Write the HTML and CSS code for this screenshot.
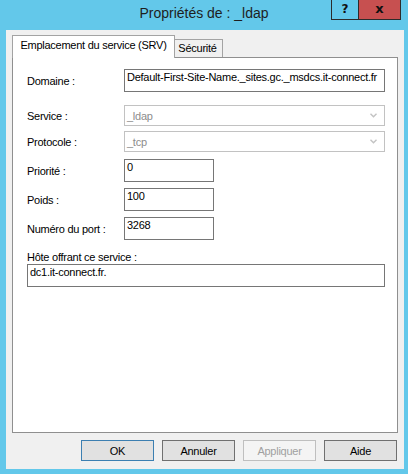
FILE: index.html
```html
<!DOCTYPE html>
<html lang="fr">
<head>
<meta charset="utf-8">
<title>Propriétés de : _ldap</title>
<link rel="stylesheet" href="styles.css">
</head>
<body>
<div class="window">
  <div class="titlebar">
    <div class="tb-spacer"></div>
    <div class="title">Propriétés de : _ldap</div>
    <div class="caps">
      <div class="cap help">?</div>
      <div class="cap close">x</div>
    </div>
  </div>
  <div class="client">
    <div class="tabs">
      <div class="tab tab-sel">Emplacement du service (SRV)</div>
      <div class="tab tab-off">Sécurité</div>
    </div>
    <div class="panel">
      <div class="row r-dom">
        <span class="lbl">Domaine :</span>
        <div class="box box-wide">Default-First-Site-Name._sites.gc._msdcs.it-connect.fr</div>
      </div>
      <div class="row r-svc">
        <span class="lbl">Service :</span>
        <div class="select"><span>_ldap</span><svg class="chev" width="7" height="5" viewBox="0 0 7 5"><polyline points="0.5,0.8 3.5,3.8 6.5,0.8" fill="none" stroke="#c3c3c3" stroke-width="1.4"/></svg></div>
      </div>
      <div class="row r-proto">
        <span class="lbl">Protocole :</span>
        <div class="select"><span>_tcp</span><svg class="chev" width="7" height="5" viewBox="0 0 7 5"><polyline points="0.5,0.8 3.5,3.8 6.5,0.8" fill="none" stroke="#c3c3c3" stroke-width="1.4"/></svg></div>
      </div>
      <div class="row r-prio">
        <span class="lbl">Priorité :</span>
        <div class="box box-small">0</div>
      </div>
      <div class="row r-next">
        <span class="lbl">Poids :</span>
        <div class="box box-small">100</div>
      </div>
      <div class="row r-next">
        <span class="lbl">Numéro du port :</span>
        <div class="box box-small">3268</div>
      </div>
      <div class="host-lbl">Hôte offrant ce service :</div>
      <div class="box box-host">dc1.it-connect.fr.</div>
    </div>
    <div class="buttons">
      <div class="btn btn-default">OK</div>
      <div class="btn">Annuler</div>
      <div class="btn btn-disabled">Appliquer</div>
      <div class="btn">Aide</div>
    </div>
  </div>
</div>
</body>
</html>
```
FILE: styles.css
```css
* { box-sizing: border-box; }
html, body { margin: 0; padding: 0; }
body {
  background: #63c8ea;
  font-family: "Liberation Sans", Arial, sans-serif;
  font-size: 11px;
  letter-spacing: -0.25px;
  color: #000;
}
.window {
  width: 408px;
  height: 474px;
  background: #63c8ea;
}
.titlebar {
  height: 30px;
  display: grid;
  grid-template-columns: 1fr auto 1fr;
  align-items: start;
}
.title {
  font-size: 14px;
  letter-spacing: 0;
  line-height: 26px;
  color: #1e1e1e;
  white-space: nowrap;
}
.caps {
  justify-self: end;
  margin-right: 7px;
  display: flex;
  height: 20px;
  border: 1px solid #2b2b2b;
  border-top: 0;
}
.cap {
  font-family: "DejaVu Sans", sans-serif;
  font-weight: bold;
  letter-spacing: 0;
  display: flex;
  justify-content: center;
  align-items: center;
  color: #111;
}
.help {
  width: 27px;
  border-right: 1px solid #2b2b2b;
  font-size: 12px;
  padding-bottom: 2px;
}
.close {
  width: 41px;
  background: #c75050;
  font-size: 13px;
  padding-bottom: 3px;
}
.client {
  margin: 0 4px 0 6px;
  height: 439px;
  background: #f0f0f0;
  padding: 5px 6px 8px 6px;
}
.tabs {
  display: flex;
  align-items: flex-start;
  height: 22px;
}
.tab {
  line-height: 13px;
  white-space: nowrap;
  text-align: center;
}
.tab-sel {
  position: relative;
  z-index: 1;
  width: 163px;
  height: 23px;
  background: #fff;
  border: 1px solid #a3a3a3;
  border-bottom: 0;
  padding-top: 3px;
}
.tab-off {
  width: 48px;
  height: 18px;
  margin-top: 4px;
  border-top: 1px solid #a3a3a3;
  border-right: 1px solid #a3a3a3;
  padding-top: 2px;
  padding-right: 2px;
}
.panel {
  height: 376px;
  background: #fff;
  border: 1px solid #8f8f8f;
  padding: 11px 12px 0 14px;
}
.row {
  display: flex;
  align-items: center;
}
.lbl {
  width: 97px;
  flex: none;
  white-space: nowrap;
}
.r-svc { margin-top: 13px; }
.r-proto { margin-top: 5px; }
.r-prio { margin-top: 7px; }
.r-next { margin-top: 6px; }
.box {
  height: 23px;
  border: 1px solid #767676;
  padding: 0 2px;
  line-height: 14px;
  white-space: nowrap;
  overflow: hidden;
}
.box-wide { width: 261px; }
.box-small { width: 90px; }
.box-host { width: 358px; }
.select {
  width: 261px;
  height: 21px;
  border: 1px solid #c2c2c2;
  padding: 0 7px 0 2px;
  display: flex;
  justify-content: space-between;
  align-items: center;
  line-height: 14px;
  color: #8d8d8d;
}
.chev { display: block; }
.host-lbl {
  margin-top: 11px;
  line-height: 13px;
}
.buttons {
  display: flex;
  justify-content: flex-end;
  gap: 8px;
  margin-top: 7px;
  margin-right: 1px;
}
.btn {
  width: 73px;
  height: 21px;
  background: #e1e1e1;
  border: 1px solid #707070;
  display: flex;
  justify-content: center;
  align-items: center;
}
.btn-default { border-color: #3c7fb1; }
.btn-disabled {
  background: #f4f4f4;
  border-color: #bfbfbf;
  color: #a0a0a0;
}
```
